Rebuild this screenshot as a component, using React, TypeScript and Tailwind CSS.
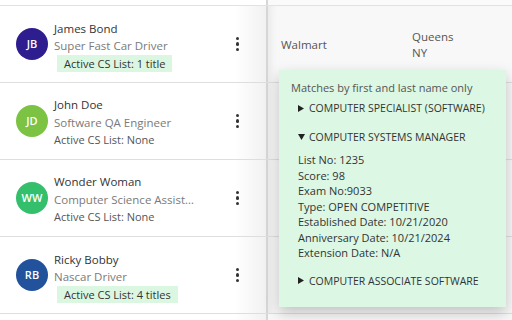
import React from "react";

type Person = {
  initials: string;
  name: string;
  title: string;
  color: string;
  list: string;
  badge: boolean;
};

const people: Person[] = [
  { initials: "JB", name: "James Bond", title: "Super Fast Car Driver", color: "bg-[#2e1d8e]", list: "Active CS List: 1 title", badge: true },
  { initials: "JD", name: "John Doe", title: "Software QA Engineer", color: "bg-[#7cc243]", list: "Active CS List: None", badge: false },
  { initials: "WW", name: "Wonder Woman", title: "Computer Science Assistant", color: "bg-[#33bf6b]", list: "Active CS List: None", badge: false },
  { initials: "RB", name: "Ricky Bobby", title: "Nascar Driver", color: "bg-[#22529c]", list: "Active CS List: 4 titles", badge: true },
];

function Kebab() {
  return (
    <div className="flex flex-col items-center gap-[2px]">
      <span className="block w-[3.5px] h-[3.5px] rounded-full bg-[#333]" />
      <span className="block w-[3.5px] h-[3.5px] rounded-full bg-[#333]" />
      <span className="block w-[3.5px] h-[3.5px] rounded-full bg-[#333]" />
    </div>
  );
}

function Row({ p, idx }: { p: Person; idx: number }) {
  return (
    <div className="flex h-[77px] border-b border-[#dedede]">
      <div className="w-[268px] shrink-0 flex items-center border-r-2 border-[#d6d6d6] bg-[linear-gradient(to_right,#ffffff_235px,#f1f1f1)] pl-[16px] pr-[27px]">
        <div className={`w-[32px] h-[32px] rounded-full ${p.color} flex items-center justify-center text-white text-[11px] font-semibold shrink-0`}>
          {p.initials}
        </div>
        <div className="ml-[6px] pt-[3px] flex flex-col min-w-0 flex-1 leading-[17.5px] text-[11.5px]">
          <div className="text-[#333]">{p.name}</div>
          <div className="text-[#7a7a7a] truncate w-[142px]">{p.title}</div>
          {p.badge ? (
            <div className="ml-[3px] self-start bg-[#dcf7e1] text-[#333] text-[11px] px-[7px] leading-[17px]">{p.list}</div>
          ) : (
            <div className="text-[#555] text-[11px]">{p.list}</div>
          )}
        </div>
        <Kebab />
      </div>
      <div className="flex-1 bg-[#f8f8f8] flex items-center text-[11.5px] text-[#555] shadow-[inset_8px_0_8px_-6px_rgba(0,0,0,0.08)]">
        {idx === 0 && (
          <>
            <div className="ml-[13px] w-[131px] mt-[1px]">Walmart</div>
            <div className="leading-[16px] mt-[1px]">
              <div>Queens</div>
              <div>NY</div>
            </div>
          </>
        )}
      </div>
    </div>
  );
}

function Tri({ down }: { down?: boolean }) {
  return (
    <span className="inline-flex w-[11px] items-center">
      {down ? (
        <svg width="7" height="6" viewBox="0 0 7 6"><path d="M0 0H7L3.5 6Z" fill="#222" /></svg>
      ) : (
        <svg width="6" height="7" viewBox="0 0 6 7"><path d="M0 0L6 3.5L0 7Z" fill="#222" /></svg>
      )}
    </span>
  );
}

export default function App() {
  return (
    <div
      className="relative w-[512px] h-[320px] overflow-hidden bg-white"
      style={{ fontFamily: '"Open Sans", "Liberation Sans", sans-serif' }}
    >
      <div className="h-[6px] bg-[#fafafa] border-b border-[#e2e2e2] flex">
        <div className="w-[268px] border-r-2 border-[#d6d6d6] bg-white" />
      </div>
      {people.map((p, i) => (
        <Row key={p.name} p={p} idx={i} />
      ))}
      <div className="flex h-[20px]">
        <div className="w-[268px] border-r-2 border-[#d6d6d6] bg-[linear-gradient(to_right,#ffffff_235px,#f1f1f1)]" />
        <div className="flex-1 bg-[#f8f8f8]" />
      </div>

      <div className="absolute left-[279px] top-[70px] w-[227px] h-[237px] bg-[#dcf7e3] shadow-[0_6px_14px_rgba(0,0,0,0.22)] pl-[12px] pt-[10px] text-[11px] text-[#333]">
        <div className="text-[#555] leading-[16px]">Matches by first and last name only</div>
        <div className="mt-[4px] ml-[7px] leading-[16px] text-[10.5px] flex items-center">
          <Tri />COMPUTER SPECIALIST (SOFTWARE)
        </div>
        <div className="mt-[13px] ml-[7px] leading-[16px] text-[10.5px] flex items-center">
          <Tri down />COMPUTER SYSTEMS MANAGER
        </div>
        <div className="mt-[7px] ml-[7px] leading-[15.5px]">
          <div>List No: 1235</div>
          <div>Score: 98</div>
          <div>Exam No:9033</div>
          <div>Type: OPEN COMPETITIVE</div>
          <div>Established Date: 10/21/2020</div>
          <div>Anniversary Date: 10/21/2024</div>
          <div>Extension Date: N/A</div>
        </div>
        <div className="mt-[12px] ml-[7px] leading-[16px] text-[10.5px] flex items-center">
          <Tri />COMPUTER ASSOCIATE SOFTWARE
        </div>
      </div>
    </div>
  );
}
